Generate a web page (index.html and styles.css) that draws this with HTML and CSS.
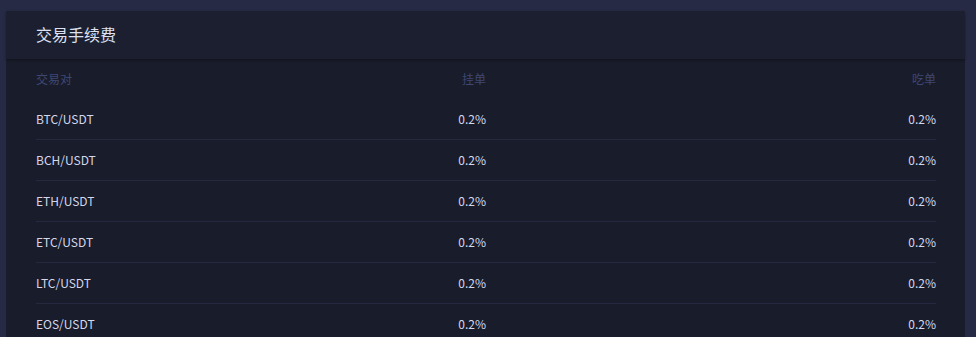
FILE: index.html
```html
<!DOCTYPE html>
<html lang="zh">
<head>
<meta charset="utf-8">
<link rel="stylesheet" href="styles.css">
</head>
<body>
<div class="card">
  <div class="card-head">交易手续费</div>
  <div class="table">
    <div class="row thead"><span>交易对</span><span class="r">挂单</span><span class="r">吃单</span></div>
    <div class="row"><span>BTC/USDT</span><span class="r">0.2%</span><span class="r">0.2%</span></div>
    <div class="row"><span>BCH/USDT</span><span class="r">0.2%</span><span class="r">0.2%</span></div>
    <div class="row"><span>ETH/USDT</span><span class="r">0.2%</span><span class="r">0.2%</span></div>
    <div class="row"><span>ETC/USDT</span><span class="r">0.2%</span><span class="r">0.2%</span></div>
    <div class="row"><span>LTC/USDT</span><span class="r">0.2%</span><span class="r">0.2%</span></div>
    <div class="row"><span>EOS/USDT</span><span class="r">0.2%</span><span class="r">0.2%</span></div>
  </div>
</div>
</body>
</html>
```
FILE: styles.css
```css
html, body {
  margin: 0;
  padding: 0;
  background: #262a45;
  font-family: "Noto Sans CJK SC", "Noto Sans", sans-serif;
  overflow: hidden;
}
body {
  padding: 11px 11px 0 6px;
  height: 337px;
  box-sizing: border-box;
}
.card {
  background: #191c2a;
  border-radius: 3px 3px 0 0;
  height: 100%;
}
.card-head {
  height: 46px;
  line-height: 46px;
  padding: 0 0 2px 30px;
  font-size: 16px;
  color: #dde1f3;
  background: #1c1f2f;
  border-radius: 3px 3px 0 0;
  box-shadow: 0 1px 3px rgba(0, 0, 0, 0.35);
  position: relative;
}
.table {
  padding: 0 29px 0 30px;
}
.row {
  display: grid;
  grid-template-columns: 1fr 1fr 2fr;
  height: 38px;
  padding-bottom: 2px;
  align-items: center;
  font-size: 12px;
  color: #d3d7ec;
  border-bottom: 1px solid #242940;
}
.row.thead {
  color: #3e4773;
  border-bottom: none;
  height: 39px;
  padding-bottom: 1px;
}
.row .r {
  text-align: right;
}
```
